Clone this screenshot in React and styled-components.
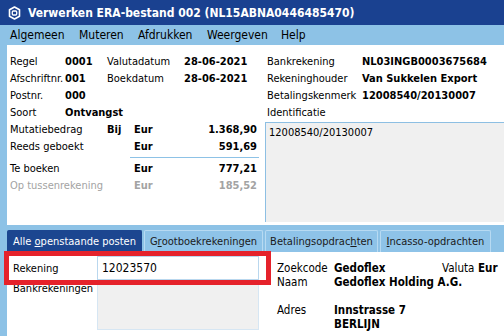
import React from 'react';
import styled, { createGlobalStyle } from 'styled-components';

const GlobalStyle = createGlobalStyle`
  html, body {
    margin: 0;
    padding: 0;
    background: #8dc2e6;
  }
  body {
    font-family: 'DejaVu Sans Condensed', 'DejaVu Sans', sans-serif;
    font-size: 11px;
    color: #000;
  }
`;

const Window = styled.div`
  width: 504px;
  height: 336px;
  overflow: hidden;
  display: flex;
  flex-direction: column;
  background: #8dc2e6;
`;

const TitleBar = styled.div`
  height: 25px;
  flex-shrink: 0;
  display: flex;
  align-items: center;
  gap: 7px;
  padding-left: 8px;
  background: #1a4190;
  color: #fff;
  font-weight: bold;
  font-size: 12px;
  white-space: nowrap;
`;

const MenuBar = styled.div`
  height: 20px;
  flex-shrink: 0;
  display: flex;
  align-items: center;
  padding-left: 10px;
  font-size: 12px;
`;

const MenuItem = styled.span`
  width: ${(p) => p.w}px;
`;

const Header = styled.div`
  margin-left: 7px;
  height: 180px;
  flex-shrink: 0;
  background: #fff;
  display: grid;
  grid-template-columns: 255px 1fr;
  box-sizing: border-box;
  padding: 8px 0 3px 0;
`;

const LeftGrid = styled.div`
  display: grid;
  grid-template-columns: 55px 42px 27px 50px 73px;
  grid-template-rows: repeat(6, 17px) 5px repeat(2, 17px);
  align-items: center;
  padding-left: 3px;
  align-content: start;
`;

const Cell = styled.span`
  grid-column: ${(p) => p.span || 'auto'};
  font-weight: ${(p) => (p.bold ? 'bold' : 'normal')};
  text-align: ${(p) => (p.right ? 'right' : 'left')};
  color: ${(p) => (p.dim ? '#a3a3a3' : '#000')};
  white-space: nowrap;
`;

const Separator = styled.div`
  grid-column: 3 / -1;
  height: 1px;
  margin-left: 23px;
  margin-right: -2px;
  background: #8dc2e6;
`;

const RightCol = styled.div`
  display: flex;
  flex-direction: column;
  padding-left: 5px;
  min-width: 0;
`;

const InfoGrid = styled.div`
  display: grid;
  grid-template-columns: 95px 1fr;
  grid-auto-rows: 17px;
  align-items: center;
`;

const IdBox = styled.div`
  flex: 1;
  margin-left: -2px;
  margin-top: 1px;
  background: #f0f0f0;
  border-top: 1px solid #8dbfe3;
  border-left: 1px solid #8dbfe3;
  padding: 3px 0 0 3px;
`;

const TabStrip = styled.div`
  display: flex;
  align-items: flex-end;
  height: 27px;
  flex-shrink: 0;
  padding-left: 7px;
  gap: 2px;
`;

const Tab = styled.div`
  height: 22px;
  width: ${(p) => p.w}px;
  box-sizing: border-box;
  display: flex;
  align-items: center;
  justify-content: center;
  white-space: nowrap;
  font-size: 11px;
  border-radius: 2px 2px 0 0;
  background: ${(p) => (p.active ? '#1c4690' : '#8ec3e8')};
  color: ${(p) => (p.active ? '#fff' : '#1a1a1a')};
  border: 1px solid ${(p) => (p.active ? '#1c4690' : '#b7daf2')};
  border-bottom: none;
`;

const Key = styled.span`
  text-decoration: underline;
`;

const Body = styled.div`
  position: relative;
  flex: 1;
  margin-left: 7px;
  background: #fff;
  display: grid;
  grid-template-columns: 263px 1fr;
`;

const SearchCol = styled.div`
  display: grid;
  grid-template-columns: 84px 162px;
  grid-template-rows: 24px 49px;
  row-gap: 1px;
  padding: 4px 0 0 6px;
  align-content: start;
`;

const FieldLabel = styled.span`
  align-self: ${(p) => (p.top ? 'start' : 'center')};
  padding-top: ${(p) => (p.top ? '1px' : '0')};
`;

const InputBox = styled.div`
  box-sizing: border-box;
  border: 1px solid #b9d7ee;
  display: flex;
  align-items: center;
  padding-left: 4px;
  font-size: 12px;
`;

const ListBox = styled.div`
  background: #f0f0f0;
  border: 1px solid #d6e6f3;
`;

const AddressGrid = styled.div`
  display: grid;
  grid-template-columns: 57px 108px 36px auto;
  grid-auto-rows: 14px;
  align-items: center;
  padding: 9px 0 0 7px;
  align-content: start;
  font-size: 11.5px;
`;

const Highlight = styled.div`
  position: absolute;
  left: -3px;
  top: -1px;
  width: 267px;
  height: 34px;
  box-sizing: border-box;
  border: 5px solid #e5222b;
  pointer-events: none;
`;

const AppIcon = () => (
  <svg width="13" height="14" viewBox="0 0 13 14">
    <path
      d="M6.5 1 L11.5 3.8 L11.5 10.2 L6.5 13 L1.5 10.2 L1.5 3.8 Z"
      fill="none"
      stroke="#fff"
      strokeWidth="1.6"
      strokeLinejoin="round"
    />
    <rect x="4.3" y="5" width="4.4" height="4" rx="1" fill="none" stroke="#fff" strokeWidth="1.3" />
  </svg>
);

const App = () => {
  return (
    <Window>
      <GlobalStyle />
      <TitleBar>
        <AppIcon />
        <span>Verwerken ERA-bestand 002 (NL15ABNA0446485470)</span>
      </TitleBar>
      <MenuBar>
        <MenuItem w={69}>Algemeen</MenuItem>
        <MenuItem w={59}>Muteren</MenuItem>
        <MenuItem w={69}>Afdrukken</MenuItem>
        <MenuItem w={74}>Weergeven</MenuItem>
        <MenuItem w={40}>Help</MenuItem>
      </MenuBar>
      <Header>
        <LeftGrid>
          <Cell>Regel</Cell>
          <Cell bold>0001</Cell>
          <Cell span="3 / 5">Valutadatum</Cell>
          <Cell bold>28-06-2021</Cell>

          <Cell>Afschriftnr.</Cell>
          <Cell bold>001</Cell>
          <Cell span="3 / 5">Boekdatum</Cell>
          <Cell bold>28-06-2021</Cell>

          <Cell>Postnr.</Cell>
          <Cell bold span="2 / -1">000</Cell>

          <Cell>Soort</Cell>
          <Cell bold span="2 / -1">Ontvangst</Cell>

          <Cell span="1 / 3">Mutatiebedrag</Cell>
          <Cell bold>Bij</Cell>
          <Cell bold>Eur</Cell>
          <Cell bold right>1.368,90</Cell>

          <Cell span="1 / 4">Reeds geboekt</Cell>
          <Cell bold>Eur</Cell>
          <Cell bold right>591,69</Cell>

          <Separator />

          <Cell span="1 / 4">Te boeken</Cell>
          <Cell bold>Eur</Cell>
          <Cell bold right>777,21</Cell>

          <Cell dim span="1 / 4">Op tussenrekening</Cell>
          <Cell dim bold>Eur</Cell>
          <Cell dim bold right>185,52</Cell>
        </LeftGrid>
        <RightCol>
          <InfoGrid>
            <Cell>Bankrekening</Cell>
            <Cell bold>NL03INGB0003675684</Cell>
            <Cell>Rekeninghouder</Cell>
            <Cell bold>Van Sukkelen Export</Cell>
            <Cell>Betalingskenmerk</Cell>
            <Cell bold>12008540/20130007</Cell>
            <Cell>Identificatie</Cell>
          </InfoGrid>
          <IdBox>12008540/20130007</IdBox>
        </RightCol>
      </Header>
      <TabStrip>
        <Tab active w={135}>
          Alle&nbsp;<Key>o</Key>penstaande posten
        </Tab>
        <Tab w={119}>
          G<Key>r</Key>ootboekrekeningen
        </Tab>
        <Tab w={113}>
          Betalingsopdrac<Key>h</Key>ten
        </Tab>
        <Tab w={111}>
          <Key>I</Key>ncasso-opdrachten
        </Tab>
      </TabStrip>
      <Body>
        <SearchCol>
          <FieldLabel>Rekening</FieldLabel>
          <InputBox>12023570</InputBox>
          <FieldLabel top>Bankrekeningen</FieldLabel>
          <ListBox />
        </SearchCol>
        <AddressGrid>
          <Cell>Zoekcode</Cell>
          <Cell bold>Gedoflex</Cell>
          <Cell>Valuta</Cell>
          <Cell bold>Eur</Cell>
          <Cell>Naam</Cell>
          <Cell bold span="2 / -1">Gedoflex Holding A.G.</Cell>
          <Cell span="1 / -1">&nbsp;</Cell>
          <Cell>Adres</Cell>
          <Cell bold span="2 / -1">Innstrasse 7</Cell>
          <Cell />
          <Cell bold span="2 / -1">BERLIJN</Cell>
        </AddressGrid>
        <Highlight />
      </Body>
    </Window>
  );
};

export default App;
